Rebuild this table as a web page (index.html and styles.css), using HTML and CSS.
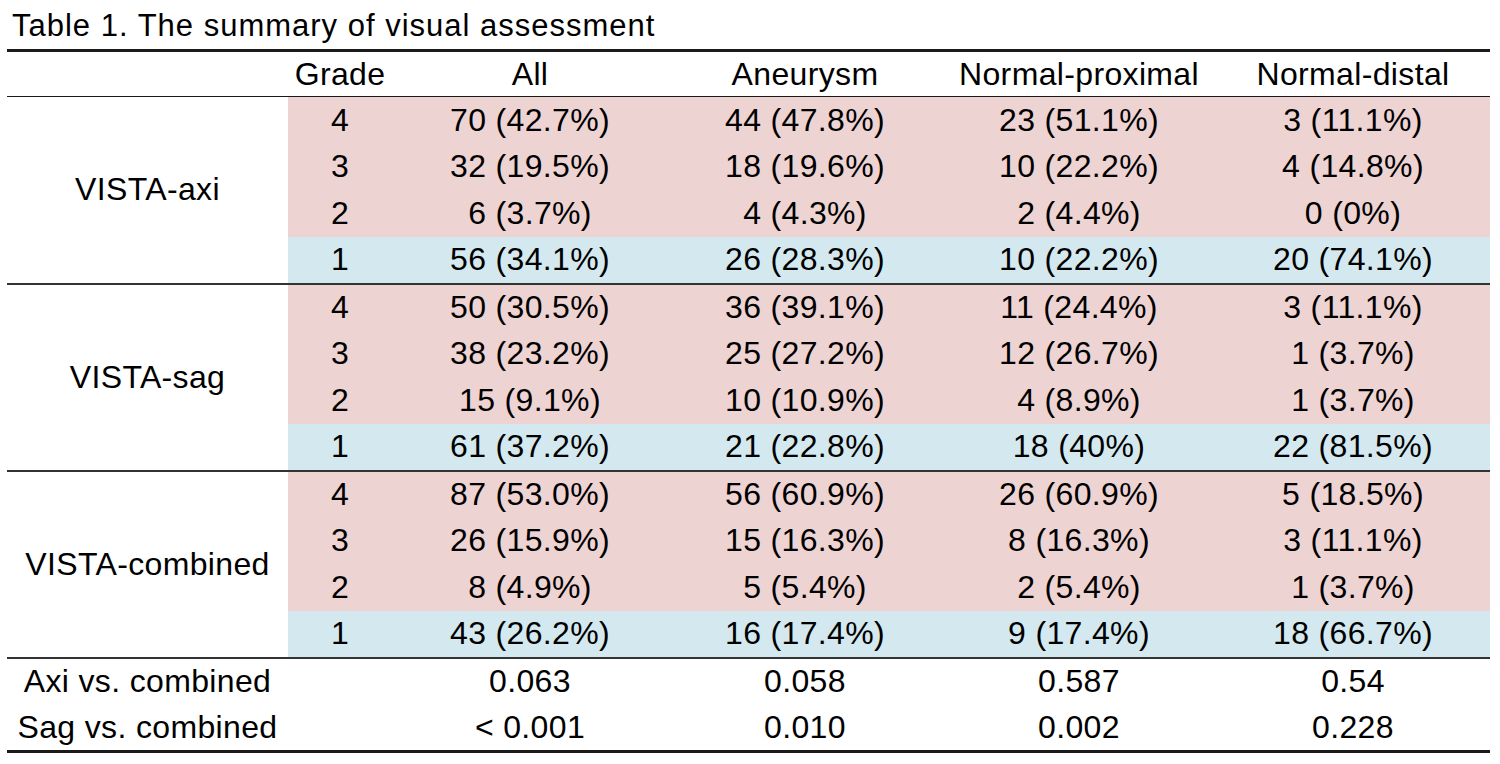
FILE: index.html
```html
<!DOCTYPE html>
<html>
<head>
<meta charset="utf-8">
<link rel="stylesheet" href="styles.css">
</head>
<body>
<div class="page">
  <div class="title">Table 1. The summary of visual assessment</div>
  <table class="summary">
    <colgroup>
      <col class="c-label"><col class="c-grade"><col class="c-all"><col class="c-val"><col class="c-val"><col class="c-val">
    </colgroup>
    <thead>
      <tr class="head">
        <th></th><th>Grade</th><th>All</th><th>Aneurysm</th><th>Normal-proximal</th><th>Normal-distal</th>
      </tr>
    </thead>
    <tbody class="group">
      <tr class="pink"><td class="label" rowspan="4">VISTA-axi</td><td>4</td><td>70 (42.7%)</td><td>44 (47.8%)</td><td>23 (51.1%)</td><td>3 (11.1%)</td></tr>
      <tr class="pink"><td>3</td><td>32 (19.5%)</td><td>18 (19.6%)</td><td>10 (22.2%)</td><td>4 (14.8%)</td></tr>
      <tr class="pink"><td>2</td><td>6 (3.7%)</td><td>4 (4.3%)</td><td>2 (4.4%)</td><td>0 (0%)</td></tr>
      <tr class="blue"><td>1</td><td>56 (34.1%)</td><td>26 (28.3%)</td><td>10 (22.2%)</td><td>20 (74.1%)</td></tr>
    </tbody>
    <tbody class="group">
      <tr class="pink"><td class="label" rowspan="4">VISTA-sag</td><td>4</td><td>50 (30.5%)</td><td>36 (39.1%)</td><td>11 (24.4%)</td><td>3 (11.1%)</td></tr>
      <tr class="pink"><td>3</td><td>38 (23.2%)</td><td>25 (27.2%)</td><td>12 (26.7%)</td><td>1 (3.7%)</td></tr>
      <tr class="pink"><td>2</td><td>15 (9.1%)</td><td>10 (10.9%)</td><td>4 (8.9%)</td><td>1 (3.7%)</td></tr>
      <tr class="blue"><td>1</td><td>61 (37.2%)</td><td>21 (22.8%)</td><td>18 (40%)</td><td>22 (81.5%)</td></tr>
    </tbody>
    <tbody class="group">
      <tr class="pink"><td class="label" rowspan="4">VISTA-combined</td><td>4</td><td>87 (53.0%)</td><td>56 (60.9%)</td><td>26 (60.9%)</td><td>5 (18.5%)</td></tr>
      <tr class="pink"><td>3</td><td>26 (15.9%)</td><td>15 (16.3%)</td><td>8 (16.3%)</td><td>3 (11.1%)</td></tr>
      <tr class="pink"><td>2</td><td>8 (4.9%)</td><td>5 (5.4%)</td><td>2 (5.4%)</td><td>1 (3.7%)</td></tr>
      <tr class="blue"><td>1</td><td>43 (26.2%)</td><td>16 (17.4%)</td><td>9 (17.4%)</td><td>18 (66.7%)</td></tr>
    </tbody>
    <tbody class="stats">
      <tr><td class="label">Axi vs. combined</td><td></td><td>0.063</td><td>0.058</td><td>0.587</td><td>0.54</td></tr>
      <tr><td class="label">Sag vs. combined</td><td></td><td>&lt; 0.001</td><td>0.010</td><td>0.002</td><td>0.228</td></tr>
    </tbody>
  </table>
</div>
</body>
</html>
```

FILE: styles.css
```css
html, body {
  margin: 0;
  padding: 0;
  background: #ffffff;
}

body {
  font-family: "Liberation Sans", Arial, sans-serif;
  color: #000;
}

.page {
  padding: 8px 10px 0 7px;
}

.title {
  font-size: 31px;
  letter-spacing: 1px;
  line-height: 36px;
  padding-left: 5px;
  margin-bottom: 5px;
  white-space: nowrap;
}

.summary {
  border-collapse: collapse;
  table-layout: fixed;
  width: 1483px;
  font-size: 32px;
  letter-spacing: 0.35px;
  border-top: 3px solid #1a1a1a;
  border-bottom: 3px solid #1a1a1a;
}

.c-label { width: 281px; }
.c-grade { width: 104px; }
.c-all { width: 276px; }
.c-val { width: 274px; }

.summary th,
.summary td {
  padding: 0;
  text-align: center;
  vertical-align: middle;
  font-weight: normal;
  white-space: nowrap;
}

.head th {
  height: 44px;
  border-bottom: 1px solid #1a1a1a;
}

.group tr {
  height: 46.75px;
}

.group {
  border-bottom: 2px solid #333;
}

.pink td { background: #eed3d3; }
.blue td { background: #d4e9ef; }

.summary td.label {
  background: #ffffff;
}

.stats tr {
  height: 47px;
}
```
